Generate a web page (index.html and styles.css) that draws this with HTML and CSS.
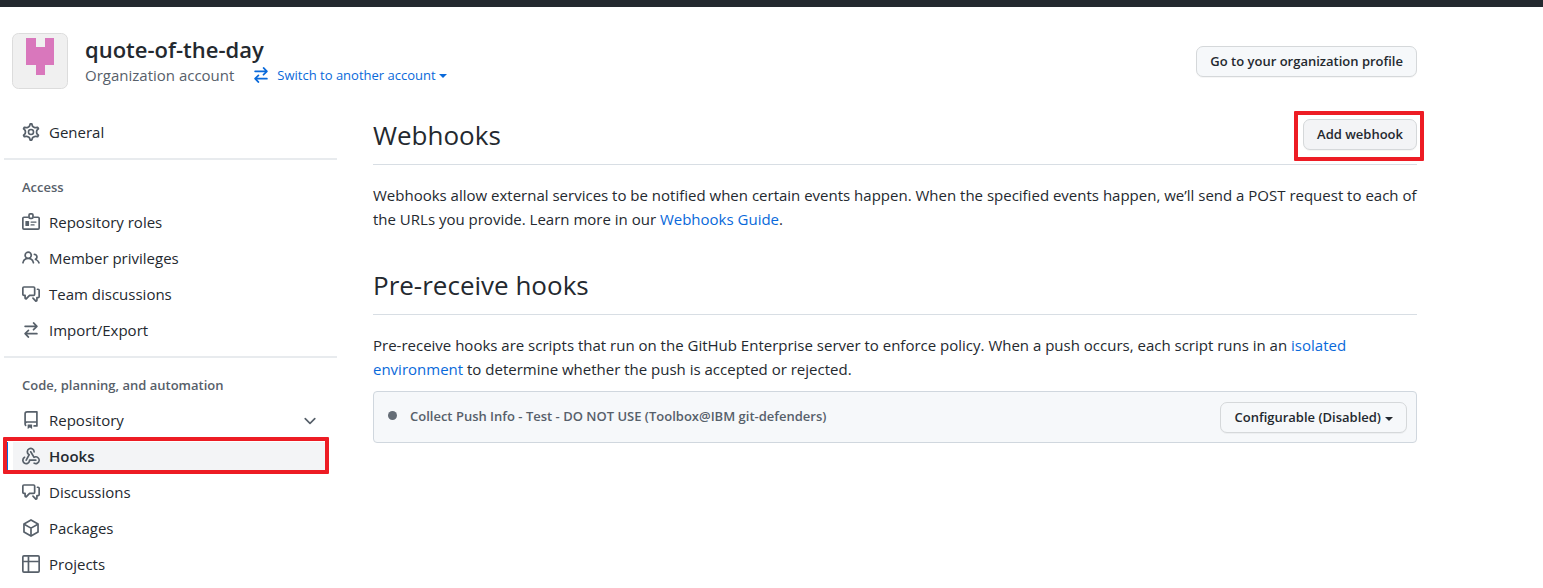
FILE: index.html
```html
<!DOCTYPE html>
<html lang="en">
<head>
<meta charset="utf-8">
<meta name="viewport" content="width=device-width, initial-scale=1">
<title>Webhooks</title>
<link rel="stylesheet" href="styles.css">
</head>
<body>
<svg class="sprite" aria-hidden="true">
  <symbol id="switch" viewBox="0 0 16 16"><path d="M5.22 14.78a.75.75 0 001.06-1.06L4.56 12h8.69a.75.75 0 000-1.5H4.56l1.72-1.72a.75.75 0 00-1.06-1.06l-3 3a.75.75 0 000 1.06l3 3zm5.56-6.5a.75.75 0 11-1.06-1.06l1.72-1.72H2.75a.75.75 0 010-1.5h8.69L9.72 2.28a.75.75 0 011.06-1.06l3 3a.75.75 0 010 1.06l-3 3z"/></symbol>
  <symbol id="discussion" viewBox="0 0 16 16"><path fill-rule="evenodd" d="M1.5 2.75a.25.25 0 01.25-.25h8.5a.25.25 0 01.25.25v5.5a.25.25 0 01-.25.25h-3.5a.75.75 0 00-.53.22L3.5 11.44V9.25a.75.75 0 00-.75-.75h-1a.25.25 0 01-.25-.25v-5.5zM1.75 1A1.75 1.75 0 000 2.75v5.5C0 9.216.784 10 1.75 10H2v1.543a1.457 1.457 0 002.487 1.03L7.061 10h3.189A1.75 1.75 0 0012 8.25v-5.5A1.75 1.75 0 0010.25 1h-8.5zM14.5 4.75a.25.25 0 00-.25-.25h-.5a.75.75 0 110-1.5h.5c.966 0 1.75.784 1.75 1.75v5.5A1.75 1.75 0 0114.25 12H14v1.543a1.457 1.457 0 01-2.487 1.03L9.22 12.28a.75.75 0 111.06-1.06l2.22 2.22v-2.19a.75.75 0 01.75-.75h1a.25.25 0 00.25-.25v-5.5z"/></symbol>
</svg>

<div class="topbar"></div>

<div class="page">
  <header class="account">
    <svg class="avatar" viewBox="0 0 56 56" role="img" aria-label="quote-of-the-day avatar">
      <rect x=".5" y=".5" width="55" height="55" rx="6" fill="#f0f0f0" stroke="#dcdcdc"/>
      <path fill="#d977bc" d="M14 5h10v9h9V5h9v27h-9v10h-9V32H14z"/>
    </svg>
    <div class="account-info">
      <h1 class="account-name">quote-of-the-day</h1>
      <div class="account-meta">
        <span class="account-type">Organization account</span>
        <button class="switcher" type="button"><svg class="icon"><use href="#switch"/></svg><span>Switch to another account</span><i class="caret"></i></button>
      </div>
    </div>
    <a class="btn" href="#profile">Go to your organization profile</a>
  </header>

  <div class="columns">
    <nav class="sidebar" aria-label="Settings">
      <ul class="nav-group">
        <li><a class="nav-item" href="#general"><svg class="icon" viewBox="0 0 16 16"><g fill="none" stroke="currentColor" stroke-width="1.4"><path transform="translate(-.88 -.88) scale(1.11)" d="M7.429 1.525a6.593 6.593 0 011.142 0c.036.003.108.036.137.146l.289 1.105c.147.56.55.967.997 1.189.174.086.341.183.501.29.417.278.97.423 1.53.27l1.102-.303c.11-.03.175.016.195.046.219.31.41.641.573.989.014.031.022.11-.059.19l-.815.806c-.411.406-.562.957-.53 1.456a4.588 4.588 0 010 .582c-.032.499.119 1.05.53 1.456l.815.806c.08.08.073.159.059.19a6.494 6.494 0 01-.573.99c-.02.029-.086.074-.195.045l-1.103-.303c-.559-.153-1.112-.008-1.529.27-.16.107-.327.204-.5.29-.449.222-.851.628-.998 1.189l-.289 1.105c-.029.11-.101.143-.137.146a6.613 6.613 0 01-1.142 0c-.036-.003-.108-.037-.137-.146l-.289-1.105c-.147-.56-.55-.967-.997-1.189a4.502 4.502 0 01-.501-.29c-.417-.278-.97-.423-1.53-.27l-1.102.303c-.11.03-.175-.016-.195-.046a6.492 6.492 0 01-.573-.989c-.014-.031-.022-.11.059-.19l.815-.806c.411-.406.562-.957.53-1.456a4.587 4.587 0 010-.582c.032-.499-.119-1.05-.53-1.456l-.815-.806c-.08-.08-.073-.159-.059-.19a6.44 6.44 0 01.573-.99c.02-.029.086-.075.195-.045l1.103.303c.559.153 1.112.008 1.529-.27.16-.107.327-.204.5-.29.449-.222.851-.628.998-1.189l.289-1.105c.029-.11.101-.143.137-.146z"/><circle cx="8" cy="8" r="2.25"/></g></svg>General</a></li>
      </ul>

      <h2 class="nav-title">Access</h2>
      <ul class="nav-group">
        <li><a class="nav-item" href="#roles"><svg class="icon" viewBox="0 0 16 16"><g fill="none" stroke="currentColor" stroke-width="1.5"><path d="M6 3.75H1.75a1 1 0 0 0-1 1v8.5a1 1 0 0 0 1 1h12.5a1 1 0 0 0 1-1v-8.5a1 1 0 0 0-1-1H10"/><rect x="6.25" y=".75" width="3.5" height="4" rx="1"/><path stroke-linecap="round" stroke-width="1.2" d="M8.1 8.1h4.3M8.1 10.6h2.6"/></g><rect x="3" y="7" width="3.3" height="4.6" rx=".6"/></svg>Repository roles</a></li>
        <li><a class="nav-item" href="#members"><svg class="icon" viewBox="0 0 16 16"><path fill-rule="evenodd" d="M5.5 3.5a2 2 0 100 4 2 2 0 000-4zM2 5.5a3.5 3.5 0 115.898 2.549 5.507 5.507 0 013.034 4.084.75.75 0 11-1.482.235 4.001 4.001 0 00-7.9 0 .75.75 0 01-1.482-.236A5.507 5.507 0 013.102 8.05 3.49 3.49 0 012 5.5zM11 4a.75.75 0 100 1.5 1.5 1.5 0 01.666 2.844.75.75 0 00-.416.672v.352a.75.75 0 00.574.73c1.2.289 2.162 1.2 2.522 2.372a.75.75 0 101.434-.44 5.01 5.01 0 00-2.56-3.012A3 3 0 0011 4z"/></svg>Member privileges</a></li>
        <li><a class="nav-item" href="#team"><svg class="icon"><use href="#discussion"/></svg>Team discussions</a></li>
        <li><a class="nav-item" href="#import"><svg class="icon"><use href="#switch"/></svg>Import/Export</a></li>
      </ul>

      <h2 class="nav-title">Code, planning, and automation</h2>
      <ul class="nav-group">
        <li><button class="nav-item" type="button" aria-expanded="false"><svg class="icon" viewBox="0 0 16 16"><path fill-rule="evenodd" d="M2 2.5A2.5 2.5 0 014.5 0h8.75a.75.75 0 01.75.75v12.5a.75.75 0 01-.75.75h-2.5a.75.75 0 110-1.5h1.75v-2h-8a1 1 0 00-.714 1.7.75.75 0 01-1.072 1.05A2.495 2.495 0 012 11.5v-9zm10.5-1V9h-8c-.356 0-.694.074-1 .208V2.5a1 1 0 011-1h8zM5 12.25v3.25a.25.25 0 00.4.2l1.45-1.087a.25.25 0 01.3 0L8.6 15.7a.25.25 0 00.4-.2v-3.25a.25.25 0 00-.25-.25h-3.5a.25.25 0 00-.25.25z"/></svg>Repository<svg class="icon chevron" viewBox="0 0 16 16"><path fill-rule="evenodd" d="M12.78 6.22a.75.75 0 010 1.06l-4.25 4.25a.75.75 0 01-1.06 0L3.22 7.28a.75.75 0 011.06-1.06L8 9.94l3.72-3.72a.75.75 0 011.06 0z"/></svg></button></li>
        <li class="current"><a class="nav-item" href="#hooks" aria-current="page"><svg class="icon" viewBox="0 0 16 16"><path d="M5.5 4.25a2.25 2.25 0 0 1 4.5 0 .75.75 0 0 0 1.5 0 3.75 3.75 0 1 0-6.14 2.889l-2.272 4.258a.75.75 0 0 0 1.324.706L7 7.25a.75.75 0 0 0-.309-1.015A2.25 2.25 0 0 1 5.5 4.25z"/><path d="M7.364 3.607a.75.75 0 0 1 1.03.257l2.608 4.349a3.75 3.75 0 1 1-.628 6.785.75.75 0 0 1 .752-1.299 2.25 2.25 0 1 0-.033-3.88.75.75 0 0 1-1.03-.256L7.107 4.636a.75.75 0 0 1 .257-1.03z"/><path d="M2.9 8.776A.75.75 0 0 1 2.625 9.8 2.25 2.25 0 1 0 6 11.75a.75.75 0 0 1 .75-.751h5.5a.75.75 0 0 1 0 1.5H7.425a3.751 3.751 0 1 1-5.55-3.998.75.75 0 0 1 1.024.274z"/></svg>Hooks</a></li>
        <li><a class="nav-item" href="#discussions"><svg class="icon"><use href="#discussion"/></svg>Discussions</a></li>
        <li><a class="nav-item" href="#packages"><svg class="icon" viewBox="0 0 16 16"><g fill="none" stroke="currentColor" stroke-width="1.5" stroke-linejoin="round"><path d="M8 .85l6.25 3.6v7.1L8 15.15l-6.25-3.6v-7.1z"/><path d="M1.9 4.6L8 8.1l6.1-3.5M8 8.1v7"/></g></svg>Packages</a></li>
        <li><a class="nav-item" href="#projects"><svg class="icon" viewBox="0 0 16 16"><g fill="none" stroke="currentColor" stroke-width="1.5"><rect x=".75" y=".75" width="14.5" height="14.5" rx="1"/><path d="M5.75 1v14M1 5.75h14"/></g></svg>Projects</a></li>
      </ul>
    </nav>

    <main class="content">
      <div class="section-head">
        <h2 class="section-title">Webhooks</h2>
        <div class="marked"><button class="btn btn-hover" type="button">Add webhook</button></div>
      </div>
      <p class="text">Webhooks allow external services to be notified when certain events happen. When the specified events happen, we’ll send a POST request to each of the URLs you provide. Learn more in our <a href="#guide">Webhooks Guide</a>.</p>

      <div class="section-head">
        <h2 class="section-title">Pre-receive hooks</h2>
      </div>
      <p class="text">Pre-receive hooks are scripts that run on the GitHub Enterprise server to enforce policy. When a push occurs, each script runs in an <a href="#isolated">isolated environment</a> to determine whether the push is accepted or rejected.</p>

      <div class="hook">
        <i class="dot"></i>
        <span class="hook-name">Collect Push Info - Test - DO NOT USE (Toolbox@IBM git-defenders)</span>
        <button class="btn" type="button">Configurable (Disabled)<i class="caret"></i></button>
      </div>
    </main>
  </div>
</div>
</body>
</html>
```
FILE: styles.css
```css
* { box-sizing: border-box; }

body {
  margin: 0;
  background: #fff;
  color: #24292f;
  font-family: "Open Sans", "Noto Sans", sans-serif;
  font-size: 15px;
  line-height: 24px;
}

h1, h2, p, ul { margin: 0; padding: 0; }
ul { list-style: none; }
a { color: #0969da; text-decoration: none; }
button { font: inherit; color: inherit; cursor: pointer; }

.sprite { position: absolute; width: 0; height: 0; }
.icon { width: 18px; height: 18px; flex: none; fill: currentColor; }

.caret {
  display: inline-block;
  margin-top: 2px;
  border: 4px solid transparent;
  border-top-color: currentColor;
  border-bottom: 0;
}

.topbar { height: 7px; background: #24292f; }
.page { padding: 26px 126px 0 4px; }

.account {
  display: flex;
  align-items: center;
  gap: 17px;
  padding-left: 8px;
}
.avatar { width: 56px; height: 56px; flex: none; }
.account-info { flex: 1; }
.account-name { font-size: 22px; line-height: 28px; font-weight: 600; }
.account-meta { display: flex; align-items: center; gap: 18px; color: #57606a; }
.switcher {
  display: flex;
  align-items: center;
  gap: 3px;
  padding: 0;
  border: 0;
  background: none;
  color: #0969da;
  font-size: 13px;
}
.switcher .icon { margin-right: 4px; }

.btn {
  display: inline-flex;
  align-items: center;
  gap: 4px;
  padding: 4px 13px;
  border: 1px solid #d5d8da;
  border-radius: 7px;
  background: #f6f8fa;
  box-shadow: 0 1px 0 rgba(27, 31, 36, 0.04);
  color: #24292f;
  font-size: 13px;
  line-height: 21px;
  font-weight: 600;
  white-space: nowrap;
}
.btn-hover { background: #f3f4f6; }

.columns {
  display: grid;
  grid-template-columns: 333px minmax(0, 1fr);
  gap: 36px;
  padding-top: 25px;
}

.nav-item {
  display: flex;
  align-items: center;
  gap: 9px;
  width: 100%;
  height: 36px;
  padding: 0 18px;
  border: 0;
  background: none;
  color: #24292f;
  text-align: left;
}
.nav-item .icon { color: #57606a; }
.nav-item .chevron { margin-left: auto; }
.nav-title {
  margin-top: 8px;
  padding: 15px 18px 5px;
  border-top: 2px solid #e8ebee;
  color: #57606a;
  font-size: 13px;
  font-weight: 600;
}
.current { position: relative; }
.current .nav-item {
  font-weight: 600;
  background: linear-gradient(90deg, #0969da 4px, #fff 4px, #fff 9px, #f3f4f6 9px);
  background-size: 321px 28px;
  background-position: 0 4px;
  background-repeat: no-repeat;
}
/* Highlight frames drawn over the interface */
.current::after, .marked::after {
  content: "";
  position: absolute;
  border: 4px solid #ed1c24;
  border-radius: 1px;
  pointer-events: none;
}
.current::after { inset: -1px 8px 0 -1px; }

.content { padding-top: 5px; }
.section-head {
  display: flex;
  align-items: center;
  justify-content: space-between;
  height: 46px;
  padding-bottom: 14px;
  border-bottom: 1px solid #d8dee4;
}
.section-title { font-size: 26px; line-height: 36px; font-weight: 400; }
.marked { position: relative; display: flex; }
.marked::after { inset: -8px -7px -11px -9px; }
.text { margin-top: 18px; }
.text + .section-head { margin-top: 38px; }

.hook {
  display: flex;
  align-items: flex-start;
  gap: 13px;
  margin-top: 10px;
  padding: 10px 9px 9px 14px;
  border: 1px solid #d0d7de;
  border-radius: 4px;
  background: #f6f8fa;
}
.dot { width: 9px; height: 9px; margin-top: 9px; border-radius: 50%; background: #656d76; }
.hook-name { flex: 1; color: #57606a; font-size: 13px; line-height: 28px; font-weight: 600; }
```
